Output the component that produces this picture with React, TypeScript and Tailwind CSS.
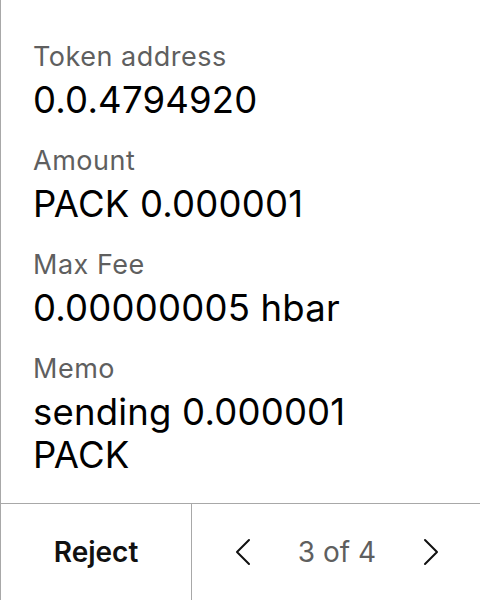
const fields = [
  { label: "Token address", value: "0.0.4794920" },
  { label: "Amount", value: "PACK 0.000001" },
  { label: "Max Fee", value: "0.00000005 hbar" },
  { label: "Memo", value: "sending 0.000001 PACK" },
];

const Chevron = ({ dir }: { dir: "left" | "right" }) => (
  <svg width="17" height="28" viewBox="0 0 17 28" fill="none" stroke="#111" strokeWidth="2" strokeLinecap="round" strokeLinejoin="round">
    {dir === "left" ? <polyline points="15,2 3,14 15,26" /> : <polyline points="2,2 14,14 2,26" />}
  </svg>
);

export default function App() {
  return (
    <div className="w-[480px] h-[600px] bg-white border-l border-[#a8a8a8] flex flex-col font-['Inter',sans-serif]">
      <div className="flex-1 flex flex-col gap-[23px] pl-[32px] pr-4 pt-[41px]">
        {fields.map((f) => (
          <div key={f.label} className="flex flex-col gap-[6px]">
            <div className="text-[27px] leading-[32px] text-[#5f5f5f] tracking-[0.5px]">{f.label}</div>
            <div className="text-[36.5px] leading-[43px] text-black tracking-[0.2px] w-[340px]">{f.value}</div>
          </div>
        ))}
      </div>
      <div className="h-[97px] border-t border-[#a8a8a8] flex">
        <div className="w-[191px] border-r border-[#a8a8a8] flex items-center justify-center text-[28px] font-semibold text-[#111]">
          Reject
        </div>
        <div className="flex-1 flex items-center justify-between pl-[42px] pr-[40px]">
          <Chevron dir="left" />
          <span className="text-[28px] text-[#5f5f5f]">3 of 4</span>
          <Chevron dir="right" />
        </div>
      </div>
    </div>
  );
}
